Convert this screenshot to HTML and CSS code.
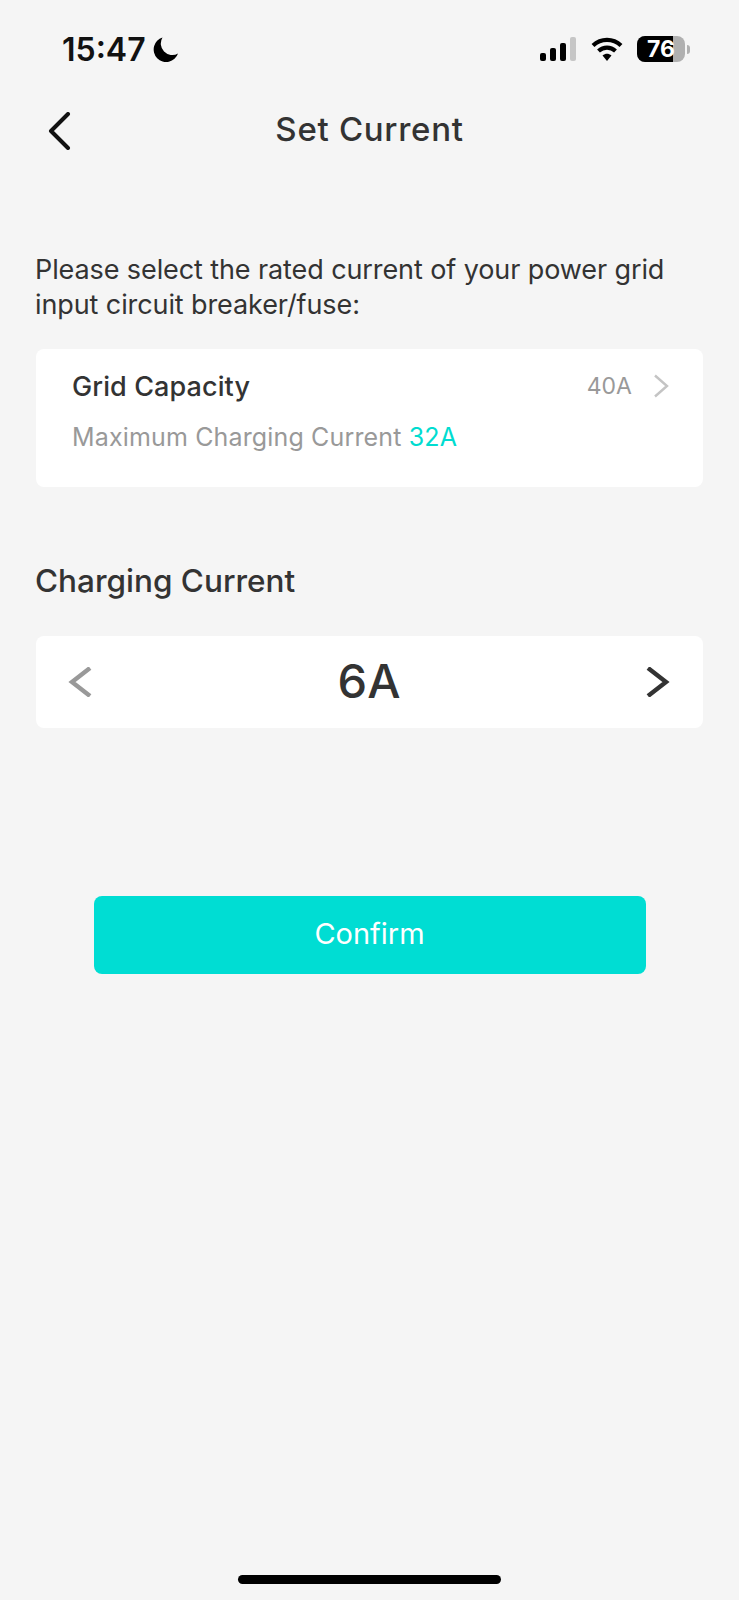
FILE: index.html
```html
<!DOCTYPE html>
<html lang="en">
<head>
    <meta charset="UTF-8">
    <meta name="viewport" content="width=device-width, initial-scale=1.0">
    <title>Set Current</title>
    <link rel="stylesheet" href="styles.css">
</head>
<body>
    <div class="screen">
        <div class="status-bar">
            <div class="status-left">
                <span class="clock">15:47</span>
                <svg class="moon" width="27" height="27" viewBox="0 0 27 27"><path d="M10.500 1.500A12.500 12.500 0 1 0 26 17.500 11.500 11.500 0 0 1 10.500 1.500Z" fill="#000"/></svg>
            </div>
            <div class="status-right">
                <svg width="38" height="26" viewBox="0 0 38 26">
                    <rect x="1" y="17" width="6" height="8" rx="2" fill="#000"/>
                    <rect x="11" y="12" width="6" height="13" rx="2" fill="#000"/>
                    <rect x="21" y="7" width="6" height="18" rx="2" fill="#000"/>
                    <rect x="31" y="1" width="6" height="24" rx="2" fill="#c6c6c6"/>
                </svg>
                <svg class="wifi" width="32" height="26" viewBox="0 0 32 26">
                    <path d="M2 9.500C10 2 22 2 30 9.500" fill="none" stroke="#000" stroke-width="4.200"/>
                    <path d="M7.500 15C12.500 10.500 19.500 10.500 24.500 15" fill="none" stroke="#000" stroke-width="4.200"/>
                    <path d="M11.500 19.500C14.500 17 17.500 17 20.500 19.500L16 25Z" fill="#000"/>
                </svg>
                <div class="battery">
                    <div class="battery-body">
                        <span class="battery-level"></span>
                        <span class="battery-num">76</span>
                    </div>
                    <span class="battery-cap"></span>
                </div>
            </div>
        </div>

        <header class="nav">
            <svg class="nav-back" width="24" height="38" viewBox="0 0 24 38"><path d="M20 2 3 19l17 17" fill="none" stroke="#111" stroke-width="4" stroke-linecap="round" stroke-linejoin="round"/></svg>
            <h1 class="nav-title">Set Current</h1>
        </header>

        <main class="content">
            <p class="intro">Please select the rated current of your power grid input circuit breaker/fuse:</p>

            <section class="card grid-card">
                <div class="grid-row">
                    <span class="grid-label">Grid Capacity</span>
                    <span class="grid-value">40A</span>
                    <svg width="16" height="24" viewBox="0 0 16 24"><path d="M2 1.500 14 12 2 22.500" fill="none" stroke="#c4c4c4" stroke-width="2.400"/></svg>
                </div>
                <p class="grid-sub">Maximum Charging Current <span class="accent">32A</span></p>
            </section>

            <h2 class="section-title">Charging Current</h2>

            <section class="card stepper">
                <svg width="24" height="30" viewBox="0 0 24 30"><path d="M22 1 4 15l18 14" fill="none" stroke="#999" stroke-width="4.400"/></svg>
                <span class="stepper-value">6A</span>
                <svg width="24" height="30" viewBox="0 0 24 30"><path d="M2 1 20 15 2 29" fill="none" stroke="#333" stroke-width="4.400"/></svg>
            </section>

            <button class="confirm" type="button">Confirm</button>
        </main>

        <div class="home-bar"></div>
    </div>
</body>
</html>
```

FILE: styles.css
```css
* {
    box-sizing: border-box;
}

body {
    margin: 0;
    background-color: #f5f5f5;
    font-family: Inter, "Liberation Sans", sans-serif;
    color: #333;
}

.screen {
    position: relative;
    height: 1600px;
    overflow: hidden;
}

.status-bar {
    display: flex;
    justify-content: space-between;
    align-items: center;
    height: 50px;
    margin-top: 24px;
    padding: 0 49px 0 62px;
}

.status-left {
    display: flex;
    align-items: center;
    gap: 6px;
}

.clock {
    font-size: 32px;
    font-weight: 600;
    color: #111;
}

.status-right {
    display: flex;
    align-items: center;
    gap: 14px;
}

.battery {
    display: flex;
    align-items: center;
    gap: 2px;
}

.battery-body {
    position: relative;
    width: 48px;
    height: 26px;
    border-radius: 8px;
    background-color: #b0b0b0;
    text-align: center;
}

.battery-level {
    position: absolute;
    left: 0;
    top: 0;
    bottom: 0;
    width: 36px;
    border-radius: 8px 0 0 8px;
    background-color: #000;
}

.battery-num {
    position: relative;
    display: block;
    font-size: 23px;
    font-weight: 700;
    line-height: 26px;
    color: #fff;
}

.battery-cap {
    width: 3px;
    height: 9px;
    border-radius: 0 3px 3px 0;
    background-color: #b0b0b0;
}

.nav {
    position: relative;
    display: flex;
    align-items: center;
    justify-content: center;
    height: 56px;
    margin-top: 27px;
}

.nav-back {
    position: absolute;
    left: 48px;
    top: 11px;
}

.nav-title {
    margin: 0;
    font-size: 33px;
    font-weight: 500;
    letter-spacing: 0.7px;
    color: #333;
}

.content {
    padding: 0 35px;
}

.intro {
    margin: 95px 0 0;
    font-size: 27px;
    line-height: 35px;
    letter-spacing: -0.1px;
    color: #333;
}

.card {
    margin-left: 1px;
    margin-right: 1px;
    border-radius: 8px;
    background-color: #fff;
}

.grid-card {
    height: 138px;
    margin-top: 27px;
    padding: 19px 34px 0 36px;
}

.grid-row {
    display: flex;
    align-items: center;
    height: 36px;
}

.grid-label {
    flex: 1;
    font-size: 27px;
    font-weight: 500;
    letter-spacing: 0.1px;
    color: #333;
}

.grid-value {
    margin-right: 21px;
    font-size: 23px;
    color: #999;
}

.grid-sub {
    margin: 18px 0 0;
    font-size: 25px;
    letter-spacing: 0.15px;
    color: #999;
}

.accent {
    color: #00dcd0;
}

.section-title {
    margin: 74px 0 0;
    font-size: 31.5px;
    font-weight: 500;
    color: #333;
}

.stepper {
    display: flex;
    align-items: center;
    justify-content: space-between;
    height: 92px;
    margin-top: 36px;
    padding: 0 33px 0 32px;
}

.stepper-value {
    margin-top: -4px;
    font-size: 47px;
    font-weight: 500;
    color: #333;
}

.confirm {
    display: block;
    width: 552px;
    height: 78px;
    margin: 168px auto 0;
    padding-bottom: 5px;
    border: none;
    border-radius: 8px;
    background-color: #00ddd3;
    font-family: inherit;
    font-size: 29px;
    color: #fff;
}

.home-bar {
    position: absolute;
    left: 238px;
    bottom: 16px;
    width: 263px;
    height: 9px;
    border-radius: 5px;
    background-color: #000;
}
```
